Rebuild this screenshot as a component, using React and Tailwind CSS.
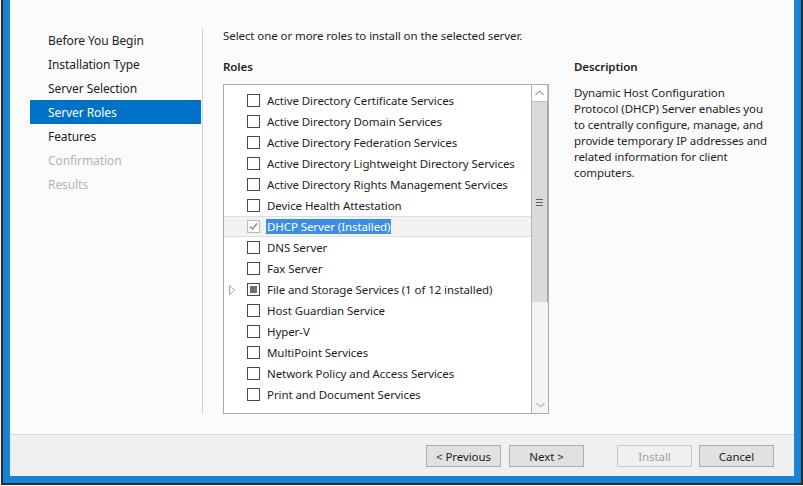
import React from "react";

const roles = [
  { name: "Active Directory Certificate Services" },
  { name: "Active Directory Domain Services" },
  { name: "Active Directory Federation Services" },
  { name: "Active Directory Lightweight Directory Services" },
  { name: "Active Directory Rights Management Services" },
  { name: "Device Health Attestation" },
  { name: "DHCP Server (Installed)", state: "installed" },
  { name: "DNS Server" },
  { name: "Fax Server" },
  { name: "File and Storage Services (1 of 12 installed)", state: "partial", expand: true },
  { name: "Host Guardian Service" },
  { name: "Hyper-V" },
  { name: "MultiPoint Services" },
  { name: "Network Policy and Access Services" },
  { name: "Print and Document Services" },
];

const nav = [
  { label: "Before You Begin" },
  { label: "Installation Type" },
  { label: "Server Selection" },
  { label: "Server Roles", active: true },
  { label: "Features" },
  { label: "Confirmation", disabled: true },
  { label: "Results", disabled: true },
];

function CheckBox({ state }) {
  if (state === "installed") {
    return (
      <div className="w-[13px] h-[13px] border border-[#bcbcbc] bg-[#fafafa] flex items-center justify-center">
        <svg width="11" height="11" viewBox="0 0 11 11">
          <polyline points="2,5.5 4.5,8 9,2.5" fill="none" stroke="#8a8a8a" strokeWidth="1.4" />
        </svg>
      </div>
    );
  }
  if (state === "partial") {
    return (
      <div className="w-[13px] h-[13px] border border-[#4a4a4a] bg-white flex items-center justify-center">
        <div className="w-[7px] h-[7px] bg-[#6e6e6e]" />
      </div>
    );
  }
  return <div className="w-[13px] h-[13px] border border-[#4a4a4a] bg-white" />;
}

function Button({ children, disabled, className = "" }) {
  return (
    <div
      className={`w-[75px] h-[22px] pt-[1px] flex items-center justify-center border ${
        disabled
          ? "bg-[#f0f0f0] border-[#c8c8c8] text-[#a0a0a0]"
          : "bg-[#e1e1e1] border-[#adadad] text-[#1e1e1e]"
      } ${className}`}
    >
      {children}
    </div>
  );
}

export default function App() {
  return (
    <div className="w-[803px] h-[486px] bg-[#f7f7f7] overflow-hidden font-['Noto_Sans',sans-serif] text-[11.5px] tracking-[-0.08px] text-[#1e1e1e]">
      <div className="ml-[1px] w-[802px] h-[485px] border-l-2 border-r-2 border-b-2 border-[#2b2b2b] bg-[#1883d7] px-[7px] pb-[7px]">
        <div className="w-[784px] h-[476px] flex flex-col bg-[#fbfbfb]">
          {/* main area */}
          <div className="h-[434px] pt-[28px] flex">
            {/* nav */}
            <div className="ml-[20px] w-[171px] h-[386px] flex flex-col">
              {nav.map((n) => (
                <div
                  key={n.label}
                  className={`h-[24px] pt-[2px] flex items-center pl-[18px] text-[12px] ${
                    n.active
                      ? "bg-[#0072c6] text-white"
                      : n.disabled
                      ? "text-[#b4b4b4]"
                      : "text-[#1e1e1e]"
                  }`}
                >
                  {n.label}
                </div>
              ))}
            </div>
            <div className="ml-[1px] w-px h-[386px] bg-[#d4d4d4]" />
            {/* content */}
            <div className="pl-[20px] flex flex-col">
              <div className="h-[16px] flex items-center">
                Select one or more roles to install on the selected server.
              </div>
              <div className="mt-[15px] flex">
                <div className="w-[326px] flex flex-col">
                  <div className="h-[16px] flex items-center font-semibold">Roles</div>
                  <div className="mt-[9px] h-[330px] border border-[#ababab] bg-white flex">
                    <div className="w-[307px] h-full overflow-hidden pt-[5px] flex flex-col">
                      {roles.map((r) => (
                        <div
                          key={r.name}
                          className={`h-[21px] shrink-0 flex items-center ${
                            r.state === "installed" ? "bg-[#f2f2f2] border-y border-[#dedede]" : ""
                          }`}
                        >
                          <div className="w-[23px] flex justify-start pl-[5px]">
                            {r.expand && (
                              <svg width="6" height="10" viewBox="0 0 6 10">
                                <polygon points="0.5,0.5 5.5,5 0.5,9.5" fill="none" stroke="#a0a0a0" strokeWidth="1" />
                              </svg>
                            )}
                          </div>
                          <CheckBox state={r.state} />
                          <div className="ml-[7px] whitespace-nowrap">
                            {r.state === "installed" ? (
                              <span className="bg-[#3b8ee3] text-white px-[1px] -ml-[1px]">{r.name}</span>
                            ) : (
                              r.name
                            )}
                          </div>
                        </div>
                      ))}
                    </div>
                    {/* scrollbar */}
                    <div className="w-[17px] h-full border-l border-[#b4b4b4] bg-[#f4f4f4] flex flex-col">
                      <div className="h-[17px] bg-white border-b border-r border-[#c4c4c4] flex items-center justify-center">
                        <svg width="9" height="6" viewBox="0 0 9 6">
                          <polyline points="0.5,5 4.5,1 8.5,5" fill="none" stroke="#606060" strokeWidth="1" />
                        </svg>
                      </div>
                      <div className="h-[200px] bg-[#dadada] border-r border-[#a6a6a6] flex items-center justify-center">
                        <div className="flex flex-col gap-[2px]">
                          <div className="w-[7px] h-px bg-[#606060]" />
                          <div className="w-[7px] h-px bg-[#606060]" />
                          <div className="w-[7px] h-px bg-[#606060]" />
                        </div>
                      </div>
                      <div className="flex-1" />
                      <div className="h-[16px] flex items-center justify-center">
                        <svg width="9" height="6" viewBox="0 0 9 6">
                          <polyline points="0.5,1 4.5,5 8.5,1" fill="none" stroke="#909090" strokeWidth="1" />
                        </svg>
                      </div>
                    </div>
                  </div>
                </div>
                <div className="ml-[25px] flex flex-col">
                  <div className="h-[16px] flex items-center font-semibold">Description</div>
                  <div className="mt-[10px] leading-[16px] whitespace-nowrap">
                    <div>Dynamic Host Configuration</div>
                    <div>Protocol (DHCP) Server enables you</div>
                    <div>to centrally configure, manage, and</div>
                    <div>provide temporary IP addresses and</div>
                    <div>related information for client</div>
                    <div>computers.</div>
                  </div>
                </div>
              </div>
            </div>
          </div>
          {/* footer */}
          <div className="flex-1 border-t border-[#dadada] bg-[#f0f0f0] flex justify-end pr-[20px] pt-[10px]">
            <Button>&lt; Previous</Button>
            <Button className="ml-[8px]">Next &gt;</Button>
            <Button disabled className="ml-[33px]">Install</Button>
            <Button className="ml-[7px]">Cancel</Button>
          </div>
        </div>
      </div>
    </div>
  );
}
